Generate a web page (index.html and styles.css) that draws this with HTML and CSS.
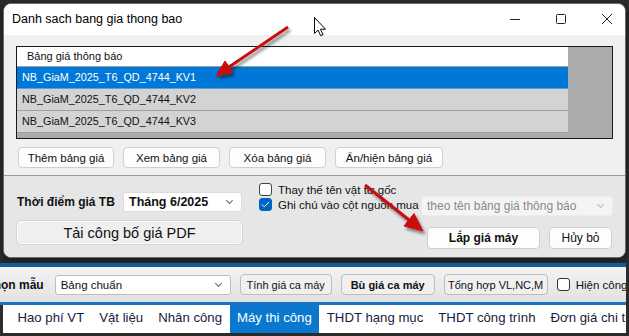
FILE: index.html
```html
<!DOCTYPE html>
<html lang="vi">
<head>
  <meta charset="UTF-8" />
  <meta name="viewport" content="width=device-width, initial-scale=1.0" />
  <title>Danh sach bang gia thong bao</title>
  <link rel="stylesheet" href="styles.css">
</head>
<body>
  <div class="screen">
    <div class="window">
      <div class="titlebar">
        <span class="title">Danh sach bang gia thong bao</span>
        <div class="controls">
          <svg width="12" height="12" viewBox="0 0 12 12"><path d="M1 6.5h10" stroke="#222" stroke-width="1"/></svg>
          <svg width="12" height="12" viewBox="0 0 12 12"><rect x="1.5" y="1.5" width="9" height="9" rx="1" fill="none" stroke="#222" stroke-width="1"/></svg>
          <svg width="12" height="12" viewBox="0 0 12 12"><path d="M1 1l10 10M11 1L1 11" stroke="#222" stroke-width="1"/></svg>
        </div>
      </div>

      <div class="top-pane">
        <div class="listbox">
          <div class="rows">
            <div class="row head">Bảng giá thông báo</div>
            <div class="row selected">NB_GiaM_2025_T6_QD_4744_KV1</div>
            <div class="row">NB_GiaM_2025_T6_QD_4744_KV2</div>
            <div class="row">NB_GiaM_2025_T6_QD_4744_KV3</div>
          </div>
        </div>
        <div class="list-actions">
          <button class="btn w96">Thêm bảng giá</button>
          <button class="btn w97">Xem bảng giá</button>
          <button class="btn w97">Xóa bảng giá</button>
          <button class="btn w108">Ẩn/hiện bảng giá</button>
        </div>
      </div>

      <div class="bottom-pane">
        <div class="col-left">
          <div class="time-row">
            <span class="label-bold">Thời điểm giá TB</span>
            <div class="combo bold">Tháng 6/2025<span class="chev"></span></div>
          </div>
          <button class="btn pdf">Tải công bố giá PDF</button>
        </div>
        <div class="col-mid">
          <label class="check"><span class="box"></span>Thay thế tên vật tư gốc</label>
          <label class="check"><span class="box on"><svg width="9" height="7" viewBox="0 0 9 7"><path d="M1 3.5l2.3 2.3L8 1" fill="none" stroke="#fff" stroke-width="1"/></svg></span>Ghi chú vào cột nguồn mua</label>
        </div>
        <div class="col-right">
          <div class="combo disabled">theo tên bảng giá thông báo<span class="chev"></span></div>
          <div class="dialog-actions">
            <button class="btn ok">Lắp giá máy</button>
            <button class="btn cancel">Hủy bỏ</button>
          </div>
        </div>
      </div>
    </div>

    <div class="app">
      <div class="app-blue"></div>
      <div class="toolbar">
        <span class="label-bold cut">Chọn mẫu</span>
        <div class="combo small">Bảng chuẩn<span class="chev"></span></div>
        <button class="btn tb w92">Tính giá ca máy</button>
        <button class="btn tb w94 bold">Bù giá ca máy</button>
        <button class="btn tb w104">Tổng hợp VL,NC,M</button>
        <label class="check tbcheck"><span class="box"></span>Hiện công</label>
      </div>
      <div class="app-line"></div>
      <div class="tabs">
        <span class="tab">Hao phí VT</span>
        <span class="tab">Vật liệu</span>
        <span class="tab">Nhân công</span>
        <span class="tab active">Máy thi công</span>
        <span class="tab">THDT hạng mục</span>
        <span class="tab">THDT công trình</span>
        <span class="tab">Đơn giá chi tiết</span>
      </div>
    </div>

    <svg class="overlay" width="629" height="336" viewBox="0 0 629 336">
      <defs>
        <filter id="shadow" x="-20%" y="-20%" width="150%" height="150%">
          <feDropShadow dx="2" dy="3" stdDeviation="1.6" flood-color="#000" flood-opacity="0.45"/>
        </filter>
      </defs>
      <g filter="url(#shadow)" fill="#c80f0f" stroke="#c80f0f">
        <line x1="288" y1="27" x2="229" y2="67" stroke-width="3"/>
        <polygon points="216,76 233,72.5 225,61" stroke-width="1"/>
        <line x1="365" y1="185" x2="409" y2="220" stroke-width="3"/>
        <polygon points="423,231 404,226 414,213.5" stroke-width="1"/>
      </g>
      <path class="cursor" d="M314.5 17.5v16l3.6-3.4 2.6 5.6 2.4-1.1-2.6-5.4h5z" fill="#fff" stroke="#000" stroke-width="1" stroke-linejoin="round"/>
    </svg>
  </div>
</body>
</html>
```

FILE: styles.css
```css
* {
  box-sizing: border-box;
  margin: 0;
  padding: 0;
}

body {
  background: #2b2b2b;
  font-family: 'Liberation Sans', Arial, sans-serif;
  font-size: 12px;
  color: #111;
  width: 629px;
  height: 336px;
  overflow: hidden;
}

.screen {
  position: relative;
  width: 629px;
  height: 336px;
  padding-top: 3px;
}

/* dialog */
.window {
  margin-left: 3px;
  width: 623px;
  height: 255px;
  border: 1px solid #6b6b6b;
  border-radius: 8px;
  overflow: hidden;
  background: #e6e6e6;
  display: flex;
  flex-direction: column;
  box-shadow: 0 2px 6px rgba(0, 0, 0, 0.5);
}

.titlebar {
  height: 31px;
  background: #fff;
  display: flex;
  align-items: center;
  justify-content: space-between;
  padding-left: 8px;
}

.title {
  font-size: 12.5px;
  color: #000;
  margin-top: -1px;
}

.controls {
  display: flex;
  gap: 34px;
  padding-right: 12px;
  margin-top: -2px;
}

.top-pane {
  background: #f0f0f0;
  padding: 11px 0 0 12px;
  height: 141px;
  border-bottom: 1px solid #9c9c9c;
}

.listbox {
  width: 597px;
  height: 93px;
  border: 1px solid #1a1a1a;
  background: #ababab;
}

.rows {
  width: 551px;
}

.row {
  height: 22px;
  line-height: 21px;
  padding-left: 5px;
  background: #d3d3d3;
  border-bottom: 1px solid #a0a0a0;
  font-size: 10.8px;
  color: #111;
}

.row.head {
  height: 20px;
  line-height: 19px;
  background: #fff;
  padding-left: 10px;
  font-size: 11px;
}

.row.selected {
  background: #0078d7;
  color: #fff;
  border-bottom-color: #5a9fd8;
}

.list-actions {
  display: flex;
  gap: 9px;
  margin-top: 8px;
  padding-left: 2px;
}

.btn {
  font-family: 'Liberation Sans', Arial, sans-serif;
  font-size: 11.5px;
  color: #111;
  background: #fdfdfd;
  border: 1px solid #cfcfcf;
  border-radius: 4px;
  height: 21px;
  white-space: nowrap;
  flex-shrink: 0;
  cursor: pointer;
}

.w96 { width: 96px; }
.w97 { width: 97px; }
.w108 { width: 108px; }

.bottom-pane {
  flex: 1;
  display: flex;
  background: #e6e6e6;
}

.col-left {
  width: 238px;
  padding: 16px 0 0 13px;
}

.time-row {
  display: flex;
  align-items: center;
  justify-content: space-between;
}

.label-bold {
  font-weight: bold;
  font-size: 12px;
  color: #111;
  white-space: nowrap;
}

.combo {
  position: relative;
  flex-shrink: 0;
  background: #fff;
  border: 1px solid #dcdcdc;
  border-radius: 3px;
  height: 20px;
  line-height: 18px;
  padding-left: 5px;
  font-size: 11.5px;
  width: 119px;
  white-space: nowrap;
}

.combo.bold {
  font-weight: bold;
  font-size: 12.5px;
}

.chev {
  position: absolute;
  right: 9px;
  top: 5px;
  width: 5px;
  height: 5px;
  border-right: 1px solid #666;
  border-bottom: 1px solid #666;
  transform: rotate(45deg);
}

.btn.pdf {
  margin-top: 9px;
  width: 225px;
  height: 23px;
  font-size: 14.5px;
  background: #efefef;
  border: 1px solid #fafafa;
  box-shadow: 0 0 0 1px #d6d6d6;
}

.col-mid {
  width: 179px;
  padding: 7px 0 0 17px;
  display: flex;
  flex-direction: column;
  gap: 2px;
}

.check {
  display: flex;
  align-items: center;
  gap: 6px;
  font-size: 11.5px;
  color: #111;
  white-space: nowrap;
}

.box {
  width: 13px;
  height: 13px;
  flex-shrink: 0;
  border: 1px solid #444;
  border-radius: 3px;
  background: #fff;
  display: flex;
  align-items: center;
  justify-content: center;
}

.box.on {
  background: #0063c6;
  border-color: #0063c6;
}

.col-right {
  width: 192px;
  padding-top: 20px;
}

.combo.disabled {
  width: 192px;
  background: #f4f4f4;
  border-color: #ececec;
  color: #8a8a8a;
  font-size: 12px;
}

.combo.disabled .chev {
  border-color: #b8b8b8;
}

.dialog-actions {
  display: flex;
  justify-content: flex-end;
  gap: 9px;
  margin-top: 11px;
  padding-right: 1px;
}

.btn.ok {
  width: 113px;
  height: 22px;
  font-weight: bold;
  font-size: 12px;
}

.btn.cancel {
  width: 63px;
  height: 22px;
  font-size: 12px;
}

/* app behind the dialog */
.app {
  margin-top: 5px;
}

.app-blue {
  height: 4px;
  background: #0f5d9c;
  margin-right: 3px;
}

.toolbar {
  height: 35px;
  margin-right: 3px;
  background: linear-gradient(#f3f3f3, #e2e2e2);
  display: flex;
  align-items: center;
  gap: 9px;
  overflow: hidden;
}

.label-bold.cut {
  margin-left: -15px;
  margin-right: 2px;
}

.combo.small {
  width: 176px;
  border-color: #bdbdbd;
  font-size: 11.5px;
}

.btn.tb {
  height: 21px;
  padding: 0;
  background: #f0f0f0;
  border-color: #bdbdbd;
  font-size: 11px;
}

.btn.tb.bold {
  font-weight: bold;
}

.w92 { width: 92px; }
.w94 { width: 94px; }
.w104 { width: 104px; }

.tbcheck {
  font-size: 11.5px;
}

.tbcheck .box {
  border-color: #333;
}

.app-line {
  height: 3px;
  background: #1c72c0;
  margin-right: 3px;
}

.tabs {
  height: 28px;
  margin: 0 3px 0 3px;
  background: #fff;
  display: flex;
  overflow: hidden;
  white-space: nowrap;
  padding-left: 7px;
}

.tab {
  font-size: 13.2px;
  color: #1a1a40;
  padding: 0 7.5px;
  line-height: 26px;
}

.tab.active {
  background: #0a78cf;
  color: #fff;
}

.overlay {
  position: absolute;
  left: 0;
  top: 0;
  pointer-events: none;
}
```
